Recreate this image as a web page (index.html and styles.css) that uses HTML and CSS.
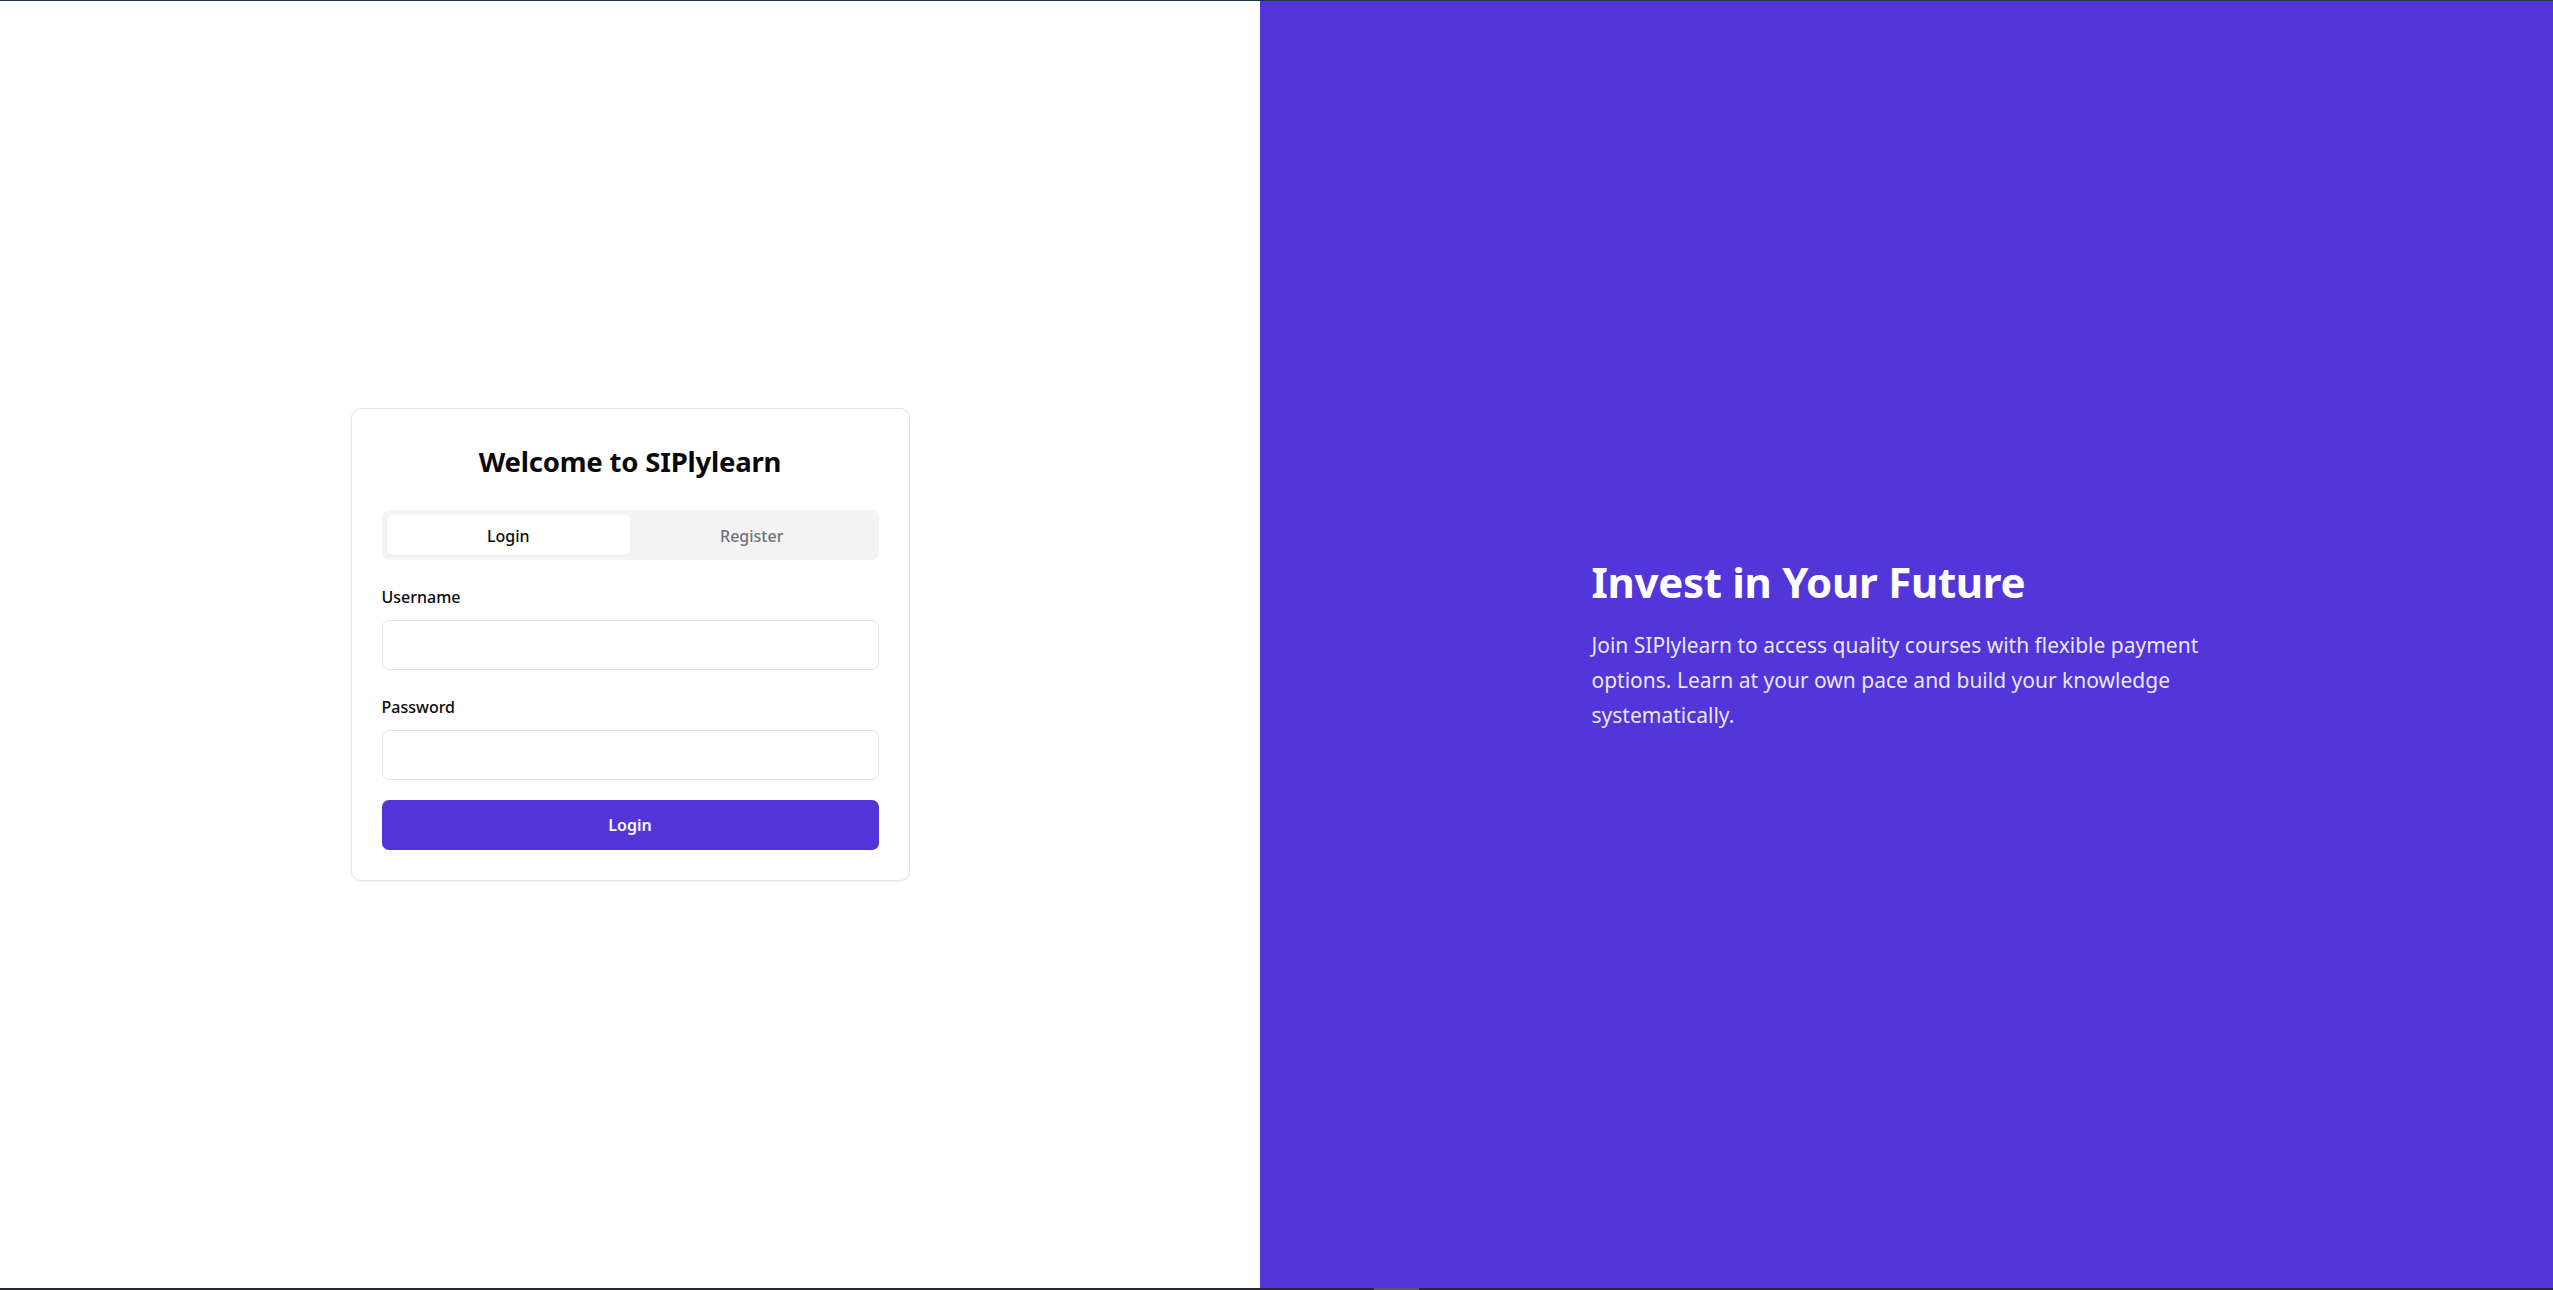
FILE: index.html
```html
<!DOCTYPE html>
<html lang="en">
<head>
<meta charset="utf-8">
<title>SIPlylearn</title>
<link rel="stylesheet" href="styles.css">
</head>
<body>
<div class="page">
  <div class="topline"></div>
  <main class="split">
    <section class="left">
      <div class="card">
        <h1 class="card-title">Welcome to SIPlylearn</h1>
        <div class="tabs">
          <button class="tab tab-active" type="button">Login</button>
          <button class="tab" type="button">Register</button>
        </div>
        <form class="form">
          <div class="field">
            <label class="label" for="username">Username</label>
            <input class="input" id="username" type="text">
          </div>
          <div class="field">
            <label class="label" for="password">Password</label>
            <input class="input" id="password" type="password">
          </div>
          <button class="submit" type="button">Login</button>
        </form>
      </div>
    </section>
    <section class="right">
      <div class="hero">
        <h2 class="hero-title">Invest in Your Future</h2>
        <p class="hero-text">Join SIPlylearn to access quality courses with flexible payment<br>options. Learn at your own pace and build your knowledge<br>systematically.</p>
      </div>
    </section>
  </main>
  <div class="bottombar"><span class="bottom-seg"></span></div>
</div>
</body>
</html>
```

FILE: styles.css
```css
* { box-sizing: border-box; }
html, body { margin: 0; padding: 0; }
body {
  font-family: "Noto Sans", "Open Sans", "Liberation Sans", sans-serif;
  color: #0a0a0a;
  background: #ffffff;
}
.page {
  height: 100vh;
  display: flex;
  flex-direction: column;
}
.topline { height: 1px; background: #1b3556; flex: none; }
.bottombar {
  height: 2px;
  background: #2a2730;
  flex: none;
  display: flex;
}
.bottom-seg {
  margin-left: 1374px;
  width: 45px;
  background: #5a5760;
}
.split {
  flex: 1;
  display: grid;
  grid-template-columns: 1260px 1fr;
  min-height: 0;
}
.left {
  display: flex;
  align-items: center;
  justify-content: center;
  background: #ffffff;
}
.card {
  width: 559px;
  padding: 30px 30px 30px 30px;
  border: 1px solid #e4e4e7;
  border-radius: 10px;
  background: #fff;
  box-shadow: 0 1px 2px rgba(0,0,0,0.05);
}
.card-title {
  margin: 0 0 26px;
  font-size: 27.5px;
  line-height: 45px;
  font-weight: 700;
  text-align: center;
  color: #09090b;
  letter-spacing: -0.2px;
}
.tabs {
  display: grid;
  grid-template-columns: 1fr 1fr;
  padding: 5px;
  height: 50px;
  background: #f4f4f5;
  border-radius: 7px;
  margin-bottom: 27px;
}
.tab {
  border: 0;
  background: transparent;
  font-family: inherit;
  font-size: 16px;
  font-weight: 500;
  color: #71717a;
  border-radius: 5px;
  padding: 2px 0 0;
  cursor: pointer;
}
.tab-active {
  background: #ffffff;
  color: #09090b;
  box-shadow: 0 1px 2px rgba(0,0,0,0.06);
}
.form { display: flex; flex-direction: column; }
.field { display: flex; flex-direction: column; margin-bottom: 27px; }
.field:last-of-type { margin-bottom: 20px; }
.label {
  font-size: 16px;
  line-height: 20px;
  font-weight: 500;
  color: #0a0a0a;
  margin-bottom: 13px;
}
.input {
  height: 50px;
  border: 1px solid #e4e4e7;
  border-radius: 7px;
  background: #fff;
  font-family: inherit;
  font-size: 17px;
  padding: 0 14px;
  outline: none;
}
.submit {
  height: 50px;
  border: 0;
  border-radius: 7px;
  background: #5336d9;
  color: #fafafa;
  font-family: inherit;
  font-size: 16px;
  font-weight: 600;
  cursor: pointer;
}
.right {
  background: #5336d9;
  display: flex;
  align-items: center;
  justify-content: center;
}
.hero {
  width: 630px;
  color: #ffffff;
}
.hero-title {
  margin: 0 0 21px;
  font-size: 42px;
  line-height: 50px;
  font-weight: 700;
  letter-spacing: -0.3px;
}
.hero-text {
  margin: 0;
  font-size: 21px;
  line-height: 35px;
  color: rgba(255,255,255,0.9);
}
```
